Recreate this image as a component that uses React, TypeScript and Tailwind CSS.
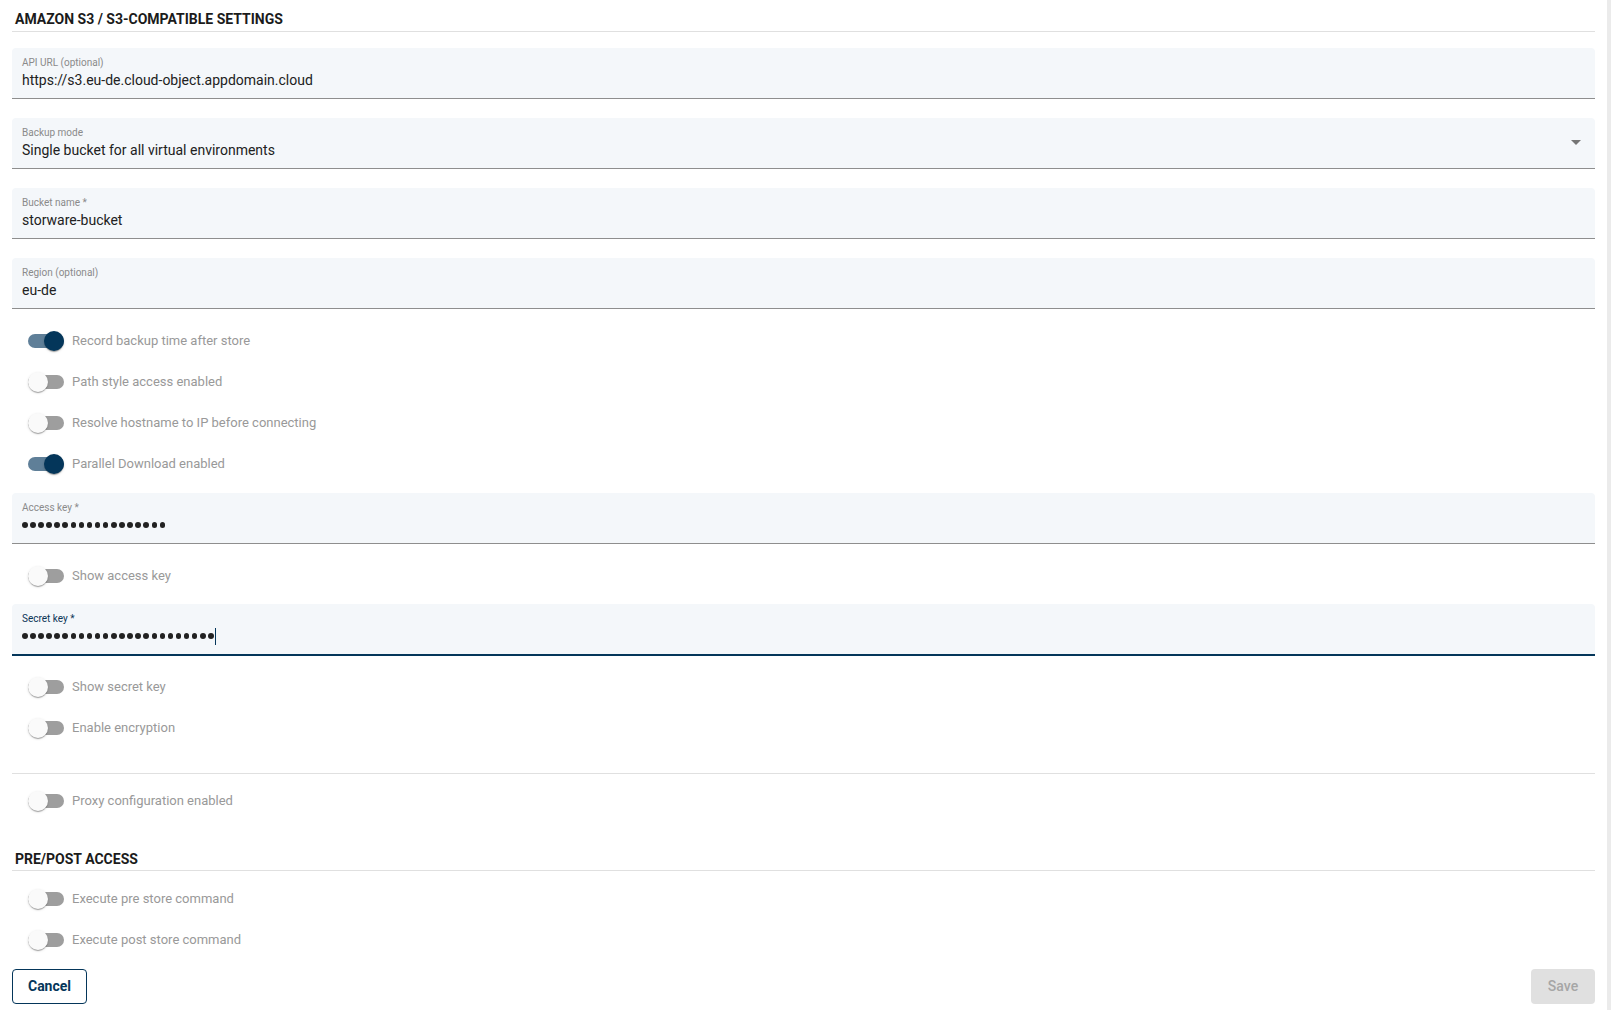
import React from 'react';

const NAVY = '#04365a';

type FieldProps = {
  label: string;
  value?: string;
  dots?: number;
  focused?: boolean;
  select?: boolean;
  className?: string;
};

// masked password value, one dark disc per character
function Masked({ count }: { count: number }) {
  return (
    <span className="flex items-center" aria-label="masked value">
      {Array.from({ length: count }, (_, i) => (
        <span key={i} className="mr-[2.6px] inline-block h-[5.5px] w-[5.5px] rounded-full bg-[#222]" />
      ))}
    </span>
  );
}

function Field({ label, value, dots, focused, select, className }: FieldProps) {
  return (
    <div
      className={`relative flex flex-col rounded-t-[4px] bg-[#f4f7fa] px-[10px] pt-[9px] ${
        focused ? 'h-[52px] border-b-2 border-[#04365a]' : 'h-[51px] border-b border-[#8e8e8e]'
      } ${className ?? ''}`}
    >
      <span
        className={`h-[12px] text-[10px] leading-[12px] ${focused ? 'text-[#0b3556]' : 'text-[#8a8a8a]'}`}
      >
        {label}
      </span>
      <div className="mt-[1px] flex h-[20px] items-center text-[14px] leading-[20px] text-[#212121]">
        {dots ? <Masked count={dots} /> : <span>{value}</span>}
        {focused && <span className="ml-[-1px] h-[17px] w-[1px] bg-[#04365a]" />}
      </div>
      {select && (
        <span className="absolute right-[14px] top-[22px] h-0 w-0 border-x-[5px] border-t-[5px] border-x-transparent border-t-[#757575]" />
      )}
    </div>
  );
}

function Toggle({ label, on }: { label: string; on?: boolean }) {
  return (
    <div className="flex h-[41px] items-center pl-[16px]">
      <div
        className={`relative h-[14px] w-[36px] shrink-0 rounded-full ${on ? 'bg-[#5f7f98]' : 'bg-[#9e9e9e]'}`}
      >
        <span
          className={`absolute top-[-3px] h-[20px] w-[20px] rounded-full shadow-[0_2px_1px_-1px_rgba(0,0,0,0.2),0_1px_1px_0_rgba(0,0,0,0.14),0_1px_3px_0_rgba(0,0,0,0.12)] ${
            on ? 'left-[16px] bg-[#04365a]' : 'left-0 bg-[#fafafa]'
          }`}
        />
      </div>
      <span className="ml-[8px] text-[13px] text-[#999]">{label}</span>
    </div>
  );
}

function SectionTitle({ children, className }: { children: React.ReactNode; className?: string }) {
  return (
    <div className={`border-b border-[#e0e0e0] pl-[3px] ${className ?? ''}`}>
      <h2 className="text-[14px] font-bold uppercase leading-[20px] text-[#1b1b1b]">{children}</h2>
    </div>
  );
}

export default function App() {
  return (
    <div className="h-[1010px] w-full overflow-hidden border-r-4 border-[#ebebeb] bg-white pl-[12px] pr-[12px] pt-[9px] font-['Roboto',sans-serif]">
      <SectionTitle className="pb-[2px]">Amazon S3 / S3-compatible settings</SectionTitle>

      <Field className="mt-[16px]" label="API URL (optional)" value="https://s3.eu-de.cloud-object.appdomain.cloud" />
      <Field className="mt-[19px]" label="Backup mode" value="Single bucket for all virtual environments" select />
      <Field className="mt-[19px]" label="Bucket name *" value="storware-bucket" />
      <Field className="mt-[19px]" label="Region (optional)" value="eu-de" />

      <div className="mt-[11px]">
        <Toggle label="Record backup time after store" on />
        <Toggle label="Path style access enabled" />
        <Toggle label="Resolve hostname to IP before connecting" />
        <Toggle label="Parallel Download enabled" on />
      </div>

      <Field className="mt-[9px]" label="Access key *" dots={18} />
      <div className="mt-[11px]">
        <Toggle label="Show access key" />
      </div>

      <Field className="mt-[8px]" label="Secret key *" dots={24} focused />
      <div className="mt-[10px]">
        <Toggle label="Show secret key" />
        <Toggle label="Enable encryption" />
      </div>

      <div className="mt-[25px] h-px bg-[#e0e0e0]" />
      <div className="mt-[6px]">
        <Toggle label="Proxy configuration enabled" />
      </div>

      <SectionTitle className="mt-[28px] pb-[1px]">Pre/Post access</SectionTitle>
      <div className="mt-[7px]">
        <Toggle label="Execute pre store command" />
        <Toggle label="Execute post store command" />
      </div>

      <div className="mt-[9px] flex items-center justify-between">
        <button
          type="button"
          className="h-[35px] w-[75px] rounded-[4px] border border-[#04365a] text-[14px] font-bold"
          style={{ color: NAVY }}
        >
          Cancel
        </button>
        <button
          type="button"
          disabled
          className="h-[35px] w-[64px] rounded-[4px] bg-[#e0e0e0] text-[14px] font-medium text-[#a6a6a6]"
        >
          Save
        </button>
      </div>
    </div>
  );
}
